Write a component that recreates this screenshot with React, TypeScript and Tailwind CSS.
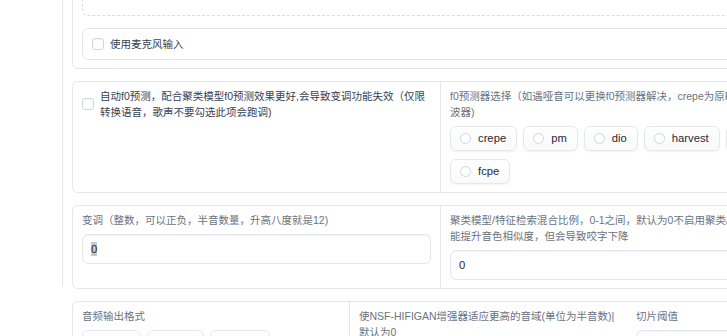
import React from "react";

function Checkbox() {
  return (
    <span className="block w-[12px] h-[12px] shrink-0 rounded-[3px] border border-[#d1d5db] bg-white shadow-[inset_0_1px_1px_rgba(0,0,0,0.04)]" />
  );
}

function RadioBtn({ label }: { label: string }) {
  return (
    <div className="h-[25px] flex items-center gap-[7px] pl-[9px] pr-[10px] rounded-[6px] border border-[#e5e7eb] bg-linear-to-t from-[#f9fafb] to-white shadow-[0_1px_2px_rgba(0,0,0,0.05)] text-[11.25px] text-[#1f2937] whitespace-nowrap">
      <span className="block w-[11px] h-[11px] rounded-full border border-[#d1d5db] bg-white shrink-0" />
      {label}
    </div>
  );
}

function Label({ lines }: { lines: string[] }) {
  return (
    <div className="text-[10.5px] leading-[16px] text-[#6b7280] whitespace-nowrap">
      {lines.map((l, i) => (
        <div key={i}>{l}</div>
      ))}
    </div>
  );
}

function Input({ children }: { children: React.ReactNode }) {
  return (
    <div className="h-[30px] rounded-[6px] border border-[#e5e7eb] bg-white px-[8px] flex items-center text-[11.25px] text-[#1f2937] shadow-[inset_0_1px_2px_rgba(0,0,0,0.05)]">
      {children}
    </div>
  );
}

export default function App() {
  return (
    <div className="w-[727px] h-[336px] overflow-hidden bg-white font-['Liberation_Sans','Noto_Sans_CJK_SC',sans-serif]">
      <div className="ml-[62px] h-[336px] border-l border-[#e5e7eb] pl-[9px]">
        <div className="w-[738px] -mt-[50px] flex flex-col gap-[12px]">
          {/* Panel 1 */}
          <div className="rounded-[6px] border border-[#e5e7eb] px-[9px] pt-[8px] pb-[8px] flex flex-col gap-[12px]">
            <div className="h-[57px] rounded-[6px] border border-dashed border-[#d9dce1]" />
            <div className="h-[32px] rounded-[6px] border border-[#e5e7eb] px-[9px] flex items-center gap-[6px]">
              <Checkbox />
              <span className="text-[10.5px] leading-[16px] text-[#374151]">使用麦克风输入</span>
            </div>
          </div>

          {/* Panel 2 */}
          <div className="grid grid-cols-2 divide-x divide-[#e5e7eb] rounded-[6px] border border-[#e5e7eb] overflow-hidden">
            <div className="px-[9px] pt-[6px] pb-[8px]">
              <div className="flex items-center gap-[6px]">
                <Checkbox />
                <div className="text-[10.5px] leading-[16px] text-[#374151] whitespace-nowrap">
                  <div>自动f0预测，配合聚类模型f0预测效果更好,会导致变调功能失效（仅限</div>
                  <div>转换语音，歌声不要勾选此项会跑调)</div>
                </div>
              </div>
            </div>
            <div className="px-[9px] pt-[6px] pb-[8px] flex flex-col gap-[6px]">
              <Label lines={["f0预测器选择（如遇哑音可以更换f0预测器解决，crepe为原F0使用均值滤", "波器)"]} />
              <div className="flex flex-wrap gap-x-[6px] gap-y-[8px]">
                <RadioBtn label="crepe" />
                <RadioBtn label="pm" />
                <RadioBtn label="dio" />
                <RadioBtn label="harvest" />
                <RadioBtn label="rmvpe" />
                <RadioBtn label="fcpe" />
              </div>
            </div>
          </div>

          {/* Panel 3 */}
          <div className="grid grid-cols-2 divide-x divide-[#e5e7eb] rounded-[6px] border border-[#e5e7eb] overflow-hidden">
            <div className="px-[9px] pt-[6px] pb-[8px] flex flex-col gap-[6px]">
              <Label lines={["变调（整数，可以正负，半音数量，升高八度就是12)"]} />
              <Input>
                <span className="bg-[#c8c8c8] leading-[14px]">0</span>
              </Input>
            </div>
            <div className="px-[9px] pt-[6px] pb-[8px] flex flex-col gap-[6px]">
              <Label lines={["聚类模型/特征检索混合比例，0-1之间，默认为0不启用聚类/特征检索。", "能提升音色相似度，但会导致咬字下降"]} />
              <Input>
                <span>0</span>
              </Input>
            </div>
          </div>

          {/* Panel 4 */}
          <div className="flex rounded-[6px] border border-[#e5e7eb] overflow-hidden h-[80px]">
            <div className="w-[277px] shrink-0 border-r border-[#e5e7eb] px-[9px] pt-[6px] flex flex-col gap-[6px]">
              <Label lines={["音频输出格式"]} />
              <div className="flex gap-[6px]">
                <RadioBtn label="wav" />
                <RadioBtn label="flac" />
                <RadioBtn label="mp3" />
              </div>
            </div>
            <div className="w-[277px] shrink-0 px-[9px] pt-[6px]">
              <Label lines={["使NSF-HIFIGAN增强器适应更高的音域(单位为半音数)|", "默认为0"]} />
            </div>
            <div className="flex-1 px-[9px] pt-[6px] flex flex-col gap-[6px]">
              <Label lines={["切片阈值"]} />
              <Input>
                <span>-40</span>
              </Input>
            </div>
          </div>
        </div>
      </div>
    </div>
  );
}
